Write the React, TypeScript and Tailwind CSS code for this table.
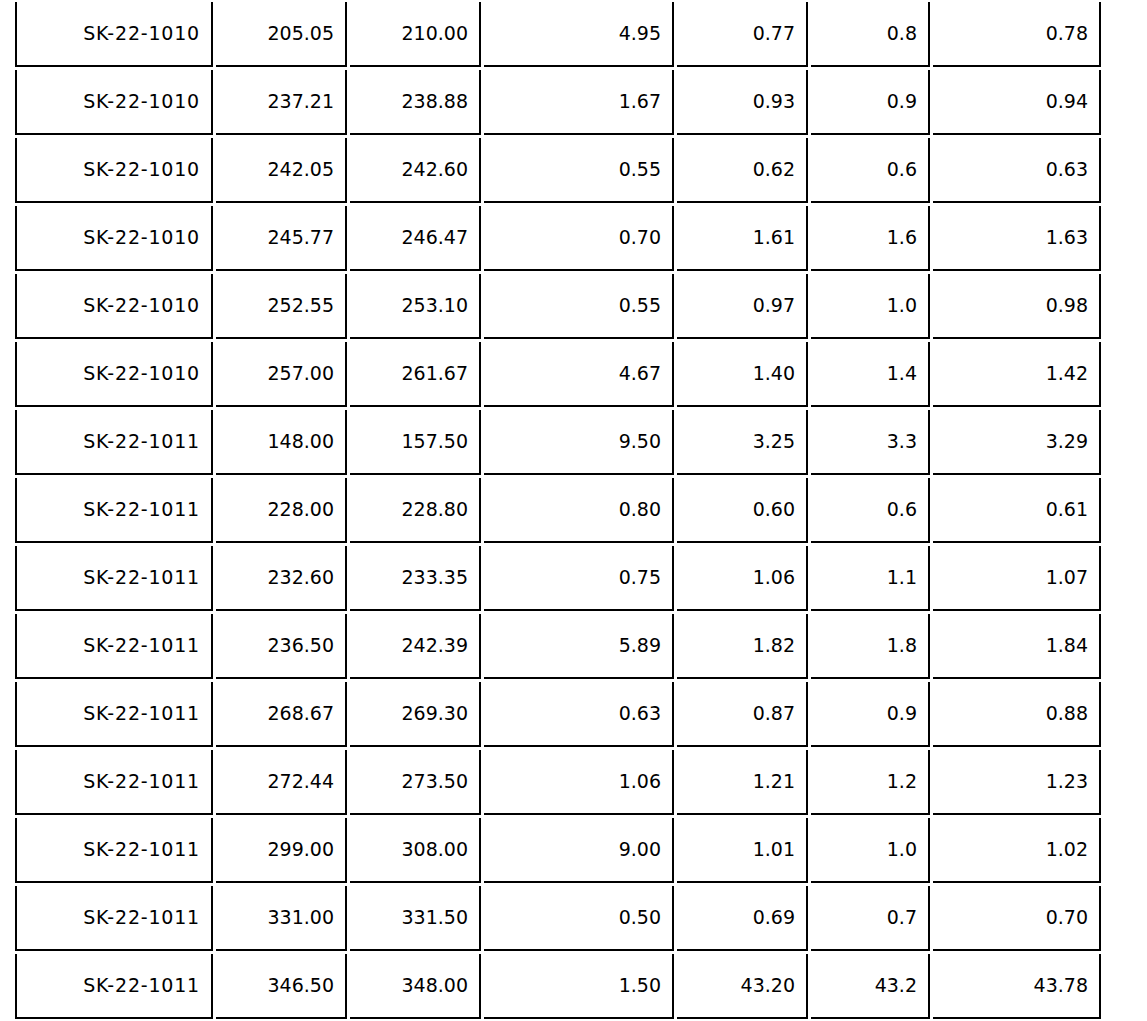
import React from 'react';

const rows: string[][] = [
  ['SK-22-1010', '205.05', '210.00', '4.95', '0.77', '0.8', '0.78'],
  ['SK-22-1010', '237.21', '238.88', '1.67', '0.93', '0.9', '0.94'],
  ['SK-22-1010', '242.05', '242.60', '0.55', '0.62', '0.6', '0.63'],
  ['SK-22-1010', '245.77', '246.47', '0.70', '1.61', '1.6', '1.63'],
  ['SK-22-1010', '252.55', '253.10', '0.55', '0.97', '1.0', '0.98'],
  ['SK-22-1010', '257.00', '261.67', '4.67', '1.40', '1.4', '1.42'],
  ['SK-22-1011', '148.00', '157.50', '9.50', '3.25', '3.3', '3.29'],
  ['SK-22-1011', '228.00', '228.80', '0.80', '0.60', '0.6', '0.61'],
  ['SK-22-1011', '232.60', '233.35', '0.75', '1.06', '1.1', '1.07'],
  ['SK-22-1011', '236.50', '242.39', '5.89', '1.82', '1.8', '1.84'],
  ['SK-22-1011', '268.67', '269.30', '0.63', '0.87', '0.9', '0.88'],
  ['SK-22-1011', '272.44', '273.50', '1.06', '1.21', '1.2', '1.23'],
  ['SK-22-1011', '299.00', '308.00', '9.00', '1.01', '1.0', '1.02'],
  ['SK-22-1011', '331.00', '331.50', '0.50', '0.69', '0.7', '0.70'],
  ['SK-22-1011', '346.50', '348.00', '1.50', '43.20', '43.2', '43.78'],
];

// outer widths incl. borders; first col is wider set (Verdana-like spacing)
const colClass = [
  'w-[198px] border-l-2 tracking-[0.8px]',
  'w-[131px]',
  'w-[131px]',
  'w-[190px]',
  'w-[131px]',
  'w-[119px]',
  'w-[168px]',
];

export default function App() {
  return (
    <main className="bg-white min-h-screen w-[1147px] h-[1021px] overflow-hidden pl-[15px] pt-[2px] font-['Verdana','DejaVu_Sans',sans-serif] text-[19px] text-black">
      <div className="flex flex-col gap-y-[3px]">
        {rows.map((r, i) => (
          <div key={i} className="flex gap-x-[3px]">
            {r.map((v, j) => (
              <div
                key={j}
                className={`${colClass[j]} h-[65px] shrink-0 border-r-2 border-b-2 border-black flex items-center justify-end pr-[11px]`}
              >
                {v}
              </div>
            ))}
          </div>
        ))}
      </div>
    </main>
  );
}
